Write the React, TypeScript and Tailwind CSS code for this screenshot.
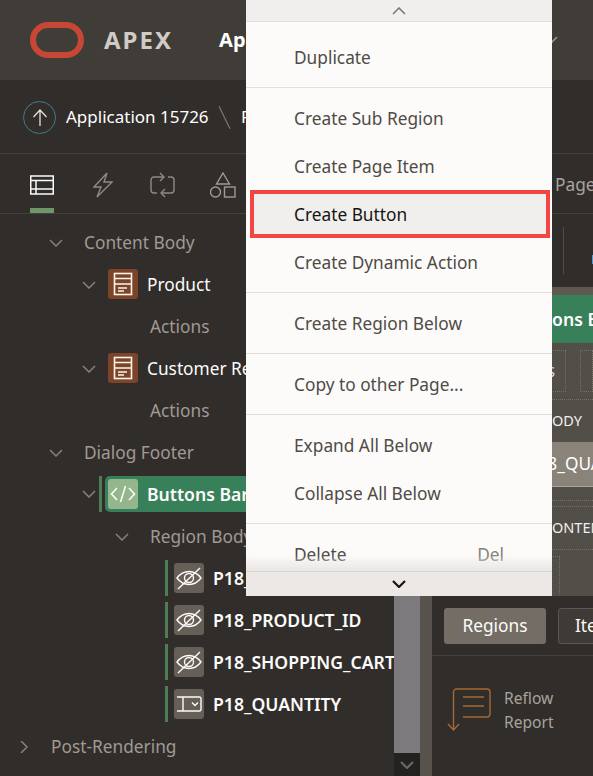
import type { ReactNode } from 'react'

const font = 'font-["Noto_Sans",sans-serif]'

function Chevron({ dir = 'down', className = 'text-[#86817a]', bold }: { dir?: 'down' | 'up' | 'right'; className?: string; bold?: boolean }) {
  const d = dir === 'down' ? 'M1 1l6 6 6-6' : dir === 'up' ? 'M1 7l6-6 6 6' : 'M4 0l6 6-6 6'
  const box = dir === 'right' ? '0 0 14 12' : '0 0 14 8'
  return (
    <svg className={`shrink-0 ${className}`} width="14" height={dir === 'right' ? 12 : 8} viewBox={box} fill="none" stroke="currentColor" strokeWidth={bold ? 2.2 : 1.5}>
      <path d={d} />
    </svg>
  )
}

function RegionIcon() {
  return (
    <div className="mt-[-2px] flex h-[30px] w-[30px] shrink-0 items-center justify-center rounded-[3px] bg-[#7c452a]">
      <svg width="20" height="24" viewBox="0 0 20 24" fill="none" stroke="#fcf5e6" strokeWidth="1.6">
        <rect x="1.500" y="1.500" width="17" height="21" />
        <path d="M1.500 6.500h17M1.500 12h17M5 16h9M5 19h6" />
      </svg>
    </div>
  )
}

function HiddenIcon() {
  return (
    <svg width="26" height="24" viewBox="0 0 26 24" fill="none" stroke="#fcfbfa" strokeWidth="1.4">
      <path d="M1 12c3-4 7-6.500 12-6.500s9 2.500 12 6.500c-3 4-7 6.500-12 6.500S4 16 1 12z" />
      <circle cx="13" cy="12" r="4.500" />
      <path d="M2 23 24 2" />
    </svg>
  )
}

function SelectIcon() {
  return (
    <svg width="26" height="24" viewBox="0 0 26 24" fill="none" stroke="#fcfbfa" strokeWidth="1.4">
      <path d="M1 5h12M1 19h12M7 5v14M13 5h10.500a1.500 1.500 0 0 1 1.500 1.500v11a1.500 1.500 0 0 1-1.500 1.500H13" />
      <path d="M16 10.500 19 13.500 22 10.500" />
    </svg>
  )
}

function ReflowIcon() {
  return (
    <svg className="shrink-0" width="44" height="44" viewBox="0 0 44 44" fill="none" stroke="#a46a35" strokeWidth="1.4">
      <path d="M6.500 42V4a3 3 0 0 1 3-3H40a3 3 0 0 1 3 3v22a3 3 0 0 1-3 3H16M16 9h21M16 18h21M1 36l5.500 6 5.500-6" />
    </svg>
  )
}

function ItemRow({ label, select }: { label: string; select?: boolean }) {
  return (
    <div className="flex h-[42px] items-center pl-[165px]">
      <div className="mr-[6px] h-9 w-[3px] shrink-0 bg-[#4f7d56]" />
      <div className="flex h-[30px] w-[30px] shrink-0 items-center justify-center rounded-[3px] bg-[#665f58]">
        {select ? <SelectIcon /> : <HiddenIcon />}
      </div>
      <span className="ml-[9px] shrink-0 whitespace-nowrap text-[17.6px] font-semibold text-[#fcfbfa]">{label}</span>
    </div>
  )
}

function TreeRow({ indent, gap, children }: { indent: string; gap: string; children: ReactNode }) {
  return (
    <div className={`flex h-[42px] items-center whitespace-nowrap pt-[2px] text-[17.3px] text-[#a09a92] ${indent} ${gap}`}>
      {children}
    </div>
  )
}

const menu: (string | { label: string; key?: string; active?: boolean })[][] = [
  ['Duplicate'],
  ['Create Sub Region', 'Create Page Item', { label: 'Create Button', active: true }, 'Create Dynamic Action'],
  ['Create Region Below'],
  ['Copy to other Page...'],
  ['Expand All Below', 'Collapse All Below'],
  [{ label: 'Delete', key: 'Del' }],
]

export default function App() {
  return (
    <div className={`relative flex h-[776px] w-[593px] flex-col overflow-hidden bg-[#312d2a] ${font}`}>
      {/* header */}
      <div className="flex h-[80px] shrink-0 items-center bg-[#403d38] pl-[30px]">
        <div className="h-[36px] w-[54px] shrink-0 rounded-[18px] border-[6px] border-[#c74634]" />
        <span className="ml-[20px] text-[24px] font-bold tracking-[2px] text-[#cfccc8]">APEX</span>
        <span className="ml-[46px] text-[20px] font-bold text-white">Ap</span>
        <div className="ml-[298px]">
          <Chevron className="text-[#a09a92]" />
        </div>
      </div>

      {/* breadcrumb */}
      <div className="flex h-[74px] shrink-0 items-center border-b border-[#45413d] pl-[23px] pt-[2px]">
        <div className="flex h-[33px] w-[33px] shrink-0 items-center justify-center rounded-full border border-[#3f7d91]">
          <svg width="16" height="18" viewBox="0 0 16 18" fill="none" stroke="#e6e2dc" strokeWidth="1.3">
            <path d="M8 17V1M1.500 8 8 1l6.500 7" />
          </svg>
        </div>
        <span className="ml-[10px] mt-[-2px] w-[142px] shrink-0 whitespace-nowrap text-[17px] text-white">Application 15726</span>
        <span className="ml-[16px] h-[25px] w-[1px] shrink-0 rotate-[-26deg] bg-[#86817a]" />
        <span className="ml-[16px] mt-[-2px] text-[17px] text-white">P</span>
      </div>

      {/* tabs */}
      <div className="relative flex h-[60px] shrink-0 items-center border-b border-[#45413d] pl-[30px] pt-[2px]">
        <svg className="shrink-0" width="24" height="20" viewBox="0 0 24 20" fill="none" stroke="#fcfbfa" strokeWidth="1.5">
          <rect x="0.750" y="1" width="22.500" height="18" />
          <path d="M1 5.500h22M1 14h22M6 5.500V19" />
        </svg>
        <div className="absolute bottom-0 left-[30px] h-[5px] w-[24px] bg-[#6f9569]" />
        <svg className="ml-[39px] shrink-0" width="20" height="26" viewBox="0 0 20 26" fill="none" stroke="#8f8a83" strokeWidth="1.4">
          <path d="M14 1 1 15h7L4 25l15-15h-8z" />
        </svg>
        <svg className="ml-[37px] shrink-0" width="25" height="26" viewBox="0 0 25 26" fill="none" stroke="#8f8a83" strokeWidth="1.4">
          <path d="M13 5H4a3 3 0 0 0-3 3v10a3 3 0 0 0 3 3h3M18 5h3a3 3 0 0 1 3 3v10a3 3 0 0 1-3 3h-9" />
          <path d="m10 1 4 4-4 4M15 17l-4 4 4 4" />
        </svg>
        <svg className="ml-[35px] shrink-0" width="26" height="26" viewBox="0 0 26 26" fill="none" stroke="#a09a92" strokeWidth="1.4">
          <path d="M13 1l6.500 11h-13z" />
          <circle cx="5.500" cy="20" r="5" />
          <rect x="14.500" y="15" width="10.500" height="10" />
        </svg>
        <span className="ml-[319px] shrink-0 whitespace-nowrap text-[17.3px] text-[#a8a39c]">Page</span>
      </div>

      {/* body */}
      <div className="flex min-h-0 flex-1">
        {/* tree */}
        <div className="w-[394px] shrink-0 overflow-hidden pt-[7px]">
          <TreeRow indent="pl-[49px]" gap="gap-[21px]">
            <Chevron />
            <span>Content Body</span>
          </TreeRow>
          <TreeRow indent="pl-[82px]" gap="gap-[12px]">
            <Chevron />
            <RegionIcon />
            <span className="ml-[-3px] text-[#fcfbfa]">Product</span>
          </TreeRow>
          <TreeRow indent="pl-[150px]" gap="">Actions</TreeRow>
          <TreeRow indent="pl-[82px]" gap="gap-[12px]">
            <Chevron />
            <RegionIcon />
            <span className="ml-[-3px] text-[#fcfbfa]">Customer Re</span>
          </TreeRow>
          <TreeRow indent="pl-[150px]" gap="">Actions</TreeRow>
          <TreeRow indent="pl-[49px]" gap="gap-[21px]">
            <Chevron />
            <span>Dialog Footer</span>
          </TreeRow>
          <div className="flex h-[42px] items-center pl-[82px]">
            <Chevron />
            <div className="ml-[3px] mr-[3px] h-9 w-[3px] shrink-0 bg-[#4f7d56]" />
            <div className="flex h-9 flex-1 items-center rounded-l-[5px] bg-[#38805a] pl-[3px]">
              <div className="flex h-[30px] w-[30px] shrink-0 items-center justify-center rounded-[3px] bg-[#94b68d]">
                <svg width="26" height="20" viewBox="0 0 26 20" fill="none" stroke="#fcfbfa" strokeWidth="1.6">
                  <path d="M7 4 1.500 10 7 16M19 4l5.500 6L19 16M15.500 2l-5 16" />
                </svg>
              </div>
              <span className="ml-[9px] whitespace-nowrap text-[17.6px] font-semibold text-[#fcfbfa]">Buttons Bar</span>
            </div>
          </div>
          <TreeRow indent="pl-[115px]" gap="gap-[21px]">
            <Chevron />
            <span>Region Body</span>
          </TreeRow>
          <ItemRow label="P18_" />
          <ItemRow label="P18_PRODUCT_ID" />
          <ItemRow label="P18_SHOPPING_CART" />
          <ItemRow label="P18_QUANTITY" select />
          <TreeRow indent="pl-[17px]" gap="gap-[20px]">
            <Chevron dir="right" />
            <span>Post-Rendering</span>
          </TreeRow>
        </div>

        {/* scrollbar */}
        <div className="flex w-[26px] shrink-0 flex-col bg-[#7c7a7c]">
          <div className="flex-1" />
          <div className="flex h-[23px] items-center justify-center bg-[#242220]">
            <Chevron className="text-[#6b6762]" bold />
          </div>
        </div>

        {/* splitter */}
        <div className="w-[12px] shrink-0 bg-[#57524c]" />

        {/* right pane */}
        <div className="min-w-0 flex-1 overflow-hidden">
          <div className="h-[382px] overflow-hidden bg-[#524e48]">
            <div className="flex h-[73px] items-center bg-[#312d2a] pl-[131px]">
              <div className="h-[47px] w-[1px] bg-[#4f4b46]" />
              <div className="ml-[28px] mt-[17px] h-[9px] w-[2px] bg-[#4f9bd0]" />
            </div>
            <div className="h-[8px] bg-[#5d5851]" />
            <div className="flex h-[48px] items-center overflow-hidden whitespace-nowrap bg-[#38805a] pl-[83px] text-[17.6px] font-semibold text-white">
              Buttons Bar
            </div>
            <div className="mt-[7px] flex h-[42px] gap-[14px]">
              <div className="flex w-[134px] shrink-0 items-center justify-end border border-dotted border-[#757068] pr-[10px] text-[15px] text-[#e6e2dc]">S</div>
              <div className="flex-1 border border-dotted border-[#757068]" />
            </div>
            <div className="mt-[7px] flex h-[43px] items-center overflow-hidden whitespace-nowrap border-t border-dotted border-[#757068] pl-[120px] text-[14.5px] text-[#f1efed]">
              ODY
            </div>
            <div className="flex h-[45px] items-center overflow-hidden whitespace-nowrap border-b border-[#a8a39c] bg-[#8a8379] pl-[95px] text-[17.3px] text-white">
              P18_QUANTITY
            </div>
            <div className="mt-[13px] h-[7px] border-y border-dotted border-[#757068]" />
            <div className="flex h-[42px] items-center overflow-hidden whitespace-nowrap pl-[120px] text-[14.5px] text-[#f1efed]">
              ONTENT
            </div>
            <div className="h-[7px] border-t border-dotted border-[#757068]" />
            <div className="h-[38px] w-[128px] border-r border-t border-dotted border-[#757068]" />
          </div>
          <div className="flex h-[60px] items-center gap-[12px] border-b border-[#45413d] pl-[12px]">
            <div className="flex h-9 w-[102px] shrink-0 items-center justify-center rounded-[3px] bg-[#736d66] text-[17.3px] text-[#fcfbfa]">Regions</div>
            <div className="flex h-9 w-[60px] shrink-0 items-center overflow-hidden rounded-l-[3px] border border-[#5b5650] bg-[#3e3a36] pl-[16px] text-[17.3px] text-[#fcfbfa]">Ite</div>
          </div>
          <div className="flex items-start pl-[15px] pt-[32px]">
            <ReflowIcon />
            <div className="ml-[13px] mt-[-2px] text-[15.6px] leading-[24px] text-[#a8a39c]">
              <div>Reflow</div>
              <div>Report</div>
            </div>
          </div>
          <div className="pl-[15px] pt-[43px]">
            <ReflowIcon />
          </div>
        </div>
      </div>

      {/* context menu */}
      <div className="absolute left-[246px] top-0 flex h-[596px] w-[306px] flex-col bg-[#fcfbfa] text-[17.3px] text-[#4f4b46]">
        <div className="flex h-[22px] shrink-0 items-center justify-center border-b border-[#e3e0dc] bg-[#f1efed]">
          <Chevron dir="up" className="text-[#7a756f]" />
        </div>
        <div className="relative min-h-0 flex-1 overflow-hidden">
          {menu.map((group, i) => (
            <div key={i} className="border-b border-[#e3e0dc] py-[6px] first:pt-[11px]">
              {group.map((entry) => {
                const item = typeof entry === 'string' ? { label: entry } : entry
                return (
                  <div
                    key={item.label}
                    className={`flex h-[48px] items-center justify-between ${item.active ? 'ml-[4px] mr-[2px] border-[4px] border-[#f44545] bg-[#f1efed] pl-[40px] pr-[44px] text-[#161513]' : 'pl-[48px] pr-[48px]'}`}
                  >
                    <span className="pt-[2px]">{item.label}</span>
                    {item.key && <span className="pt-[2px] text-[#86817a]">{item.key}</span>}
                  </div>
                )
              })}
            </div>
          ))}
          <div className="absolute bottom-0 left-0 right-0 h-[16px] bg-gradient-to-t from-[#e9e6e3] to-transparent" />
        </div>
        <div className="flex h-[25px] shrink-0 items-center justify-center border-t border-[#d9d5d0] bg-[#ebe8e5]">
          <Chevron className="text-[#161513]" bold />
        </div>
      </div>
    </div>
  )
}
